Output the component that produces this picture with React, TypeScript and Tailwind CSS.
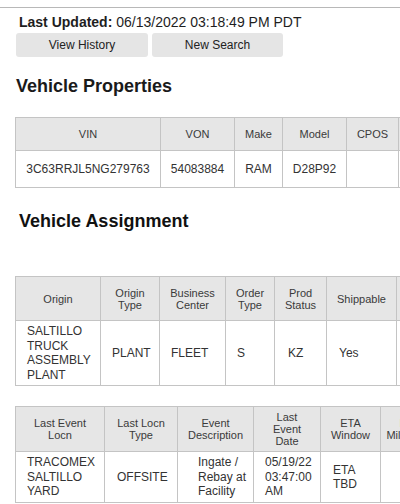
import React from "react";

type Col = { label: React.ReactNode; w: number };

const th = "border border-[#c4c4c4] bg-[#e6e6e6] text-center align-middle text-[11px] leading-[12px] font-normal text-[#3a3a3a] px-[4px]";
const td = "border border-[#c4c4c4] bg-white align-middle text-[12px] leading-[14.5px] text-[#333]";

// last columns run past the window edge, like the original page
const PROPS_COLS: Col[] = [
  { label: "VIN", w: 145 },
  { label: "VON", w: 74 },
  { label: "Make", w: 48 },
  { label: "Model", w: 64 },
  { label: "CPOS", w: 52 },
  { label: "", w: 70 },
];

const ASSIGN_COLS: Col[] = [
  { label: "Origin", w: 85 },
  { label: <>Origin<br />Type</>, w: 59 },
  { label: <>Business<br />Center</>, w: 66 },
  { label: <>Order<br />Type</>, w: 49 },
  { label: <>Prod<br />Status</>, w: 52 },
  { label: "Shippable", w: 70 },
  { label: "", w: 70 },
];

const EVENT_COLS: Col[] = [
  { label: <>Last Event<br />Locn</>, w: 89 },
  { label: <>Last Locn<br />Type</>, w: 73 },
  { label: <>Event<br />Description</>, w: 76 },
  { label: <>Last<br />Event<br />Date</>, w: 67 },
  { label: <>ETA<br />Window</>, w: 60 },
  { label: <>Last<br />Milestone</>, w: 59 },
];

function Head({ cols, h }: { cols: Col[]; h: string }) {
  return (
    <thead>
      <tr className={h}>
        {cols.map((c, i) => (
          <th key={i} className={th} style={{ width: c.w }}>
            {c.label}
          </th>
        ))}
      </tr>
    </thead>
  );
}

function tableWidth(cols: Col[]) {
  return cols.reduce((s, c) => s + c.w, 0);
}

export default function App() {
  return (
    <div className="w-[400px] h-[504px] overflow-hidden bg-white font-['Liberation_Sans',Arial,sans-serif] text-[#222]">
      <div className="h-[7px]" />
      <div className="border-t border-[#b8b8b8]" />

      <div className="pl-[19px] pt-[6px] text-[14px] leading-[16px] text-[#1e1e1e] whitespace-nowrap">
        <span className="font-bold">Last Updated:</span> 06/13/2022 03:18:49 PM PDT
      </div>

      <div className="mt-[3px] ml-[16px] flex gap-[4px]">
        <button className="h-[24px] w-[132px] rounded-[3px] bg-[#e5e5e5] text-[12px] text-[#222]">View History</button>
        <button className="h-[24px] w-[131px] rounded-[3px] bg-[#e5e5e5] text-[12px] text-[#222]">New Search</button>
      </div>

      <h2 className="mt-[18px] ml-[16px] text-[18px] leading-[22px] font-bold text-[#1a1a1a] whitespace-nowrap">Vehicle Properties</h2>

      <table
        className="mt-[20px] ml-[15px] table-fixed border-collapse"
        style={{ width: tableWidth(PROPS_COLS) }}
      >
        <Head cols={PROPS_COLS} h="h-[33px]" />
        <tbody>
          <tr className="h-[37px]">
            <td className={`${td} text-center`}>3C63RRJL5NG279763</td>
            <td className={`${td} text-center`}>54083884</td>
            <td className={`${td} text-center`}>RAM</td>
            <td className={`${td} text-center`}>D28P92</td>
            <td className={td}></td>
            <td className={td}></td>
          </tr>
        </tbody>
      </table>

      <h2 className="mt-[22px] ml-[19px] text-[18px] leading-[22px] font-bold text-[#111] whitespace-nowrap">Vehicle Assignment</h2>

      <table
        className="mt-[44px] ml-[15px] table-fixed border-collapse"
        style={{ width: tableWidth(ASSIGN_COLS) }}
      >
        <Head cols={ASSIGN_COLS} h="h-[44px]" />
        <tbody>
          <tr className="h-[65px]">
            <td className={`${td} pl-[11px] pr-[6px]`}>SALTILLO TRUCK ASSEMBLY PLANT</td>
            <td className={`${td} pl-[11px]`}>PLANT</td>
            <td className={`${td} pl-[11px]`}>FLEET</td>
            <td className={`${td} pl-[11px]`}>S</td>
            <td className={`${td} pl-[13px]`}>KZ</td>
            <td className={`${td} pl-[12px]`}>Yes</td>
            <td className={td}></td>
          </tr>
        </tbody>
      </table>

      <table
        className="mt-[20px] ml-[15px] table-fixed border-collapse"
        style={{ width: tableWidth(EVENT_COLS) }}
      >
        <Head cols={EVENT_COLS} h="h-[45px]" />
        <tbody>
          <tr className="h-[51px]">
            <td className={`${td} pl-[11px] pr-[4px]`}>TRACOMEX SALTILLO YARD</td>
            <td className={`${td} pl-[12px]`}>OFFSITE</td>
            <td className={`${td} pl-[20px] pr-[4px]`}>Ingate / Rebay at Facility</td>
            <td className={`${td} pl-[11px] pr-[4px]`}>05/19/22 03:47:00 AM</td>
            <td className={`${td} pl-[12px] pr-[20px]`}>ETA TBD</td>
            <td className={td}></td>
          </tr>
        </tbody>
      </table>
    </div>
  );
}
